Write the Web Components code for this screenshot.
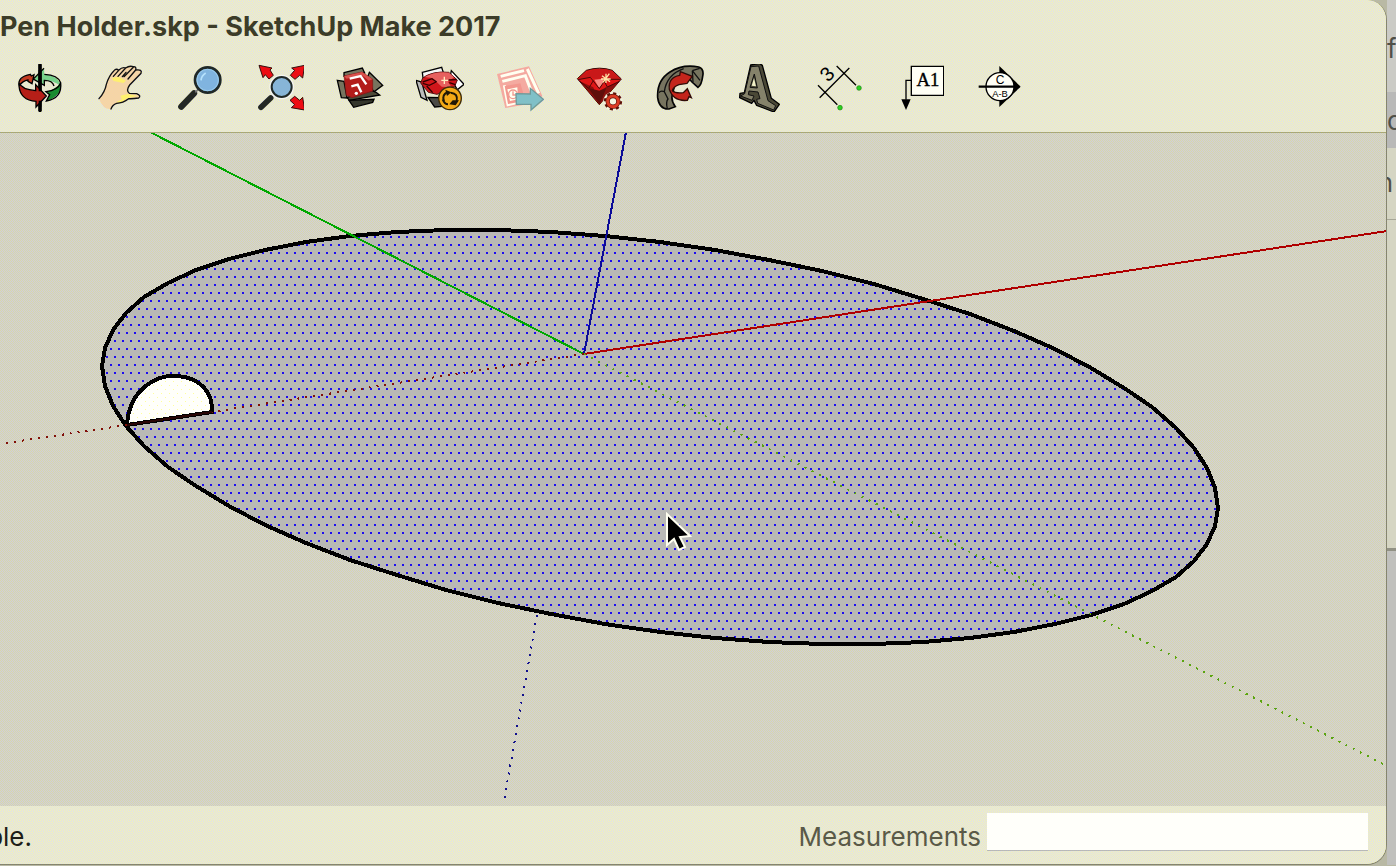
<!DOCTYPE html>
<html lang="en">
<head>
<meta charset="utf-8">
<title>Pen Holder.skp - SketchUp Make 2017</title>
<style>
    html, body {
        height: 100%;
        margin: 0;
    }

    body {
        overflow: hidden;
        font-family: Inter, "Liberation Sans", sans-serif;
        --chrome: repeating-conic-gradient(#dcdcf0 0 25%, #f6f6b0 0 50%) 0 0 / 2px 2px;
        --paper: repeating-conic-gradient(#d8d8a8 0 25%, #d0cedc 0 50%) 0 0 / 2px 2px;
    }
</style>
</head>
<body>
<sketch-desktop>
    <sketch-window>
        <window-title slot="header">Pen Holder.skp - SketchUp Make 2017</window-title>
        <tool-bar slot="header">
            <tool-button label="Orbit">
                <svg viewBox="48 42 144 144">
                    <path fill="#c33a20" d="M57 98Q64 78 91 73L94 78L102 74L96 101L84 94V90Q68 92 57 108Z"/>
                    <path fill="#78d28b" d="M132 55L100 87L133 106V91Q160 92 182 108Q179 80 133 73Z"/>
                    <path fill="#188c30" d="M182 99Q186 138 139 153L149 134L138 125Q164 120 182 99Z"/>
                    <path stroke="#000" stroke-width="11" stroke-linecap="round" d="M120 45V181"/>
                    <path fill="#b51f18" d="M57 98Q63 117 107 122V104L139 138L108 171V154Q54 148 57 98Z"/>
                    <path fill="none" stroke="#000" stroke-width="4" d="M57 108Q68 92 84 90V94L96 101L102 74L94 78L91 73Q52 80 57 108Q61 151 108 154V171L139 138L107 104V122Q65 118 57 98M132 55L100 87L133 106V91Q158 91 162 108M133 73Q174 75 182 98Q187 145 139 153L149 134L138 125Q174 121 182 98"/>
                    <path stroke="#000" stroke-width="8" d="M120 60V124M120 152V170"/>
                </svg>
            </tool-button>
            <tool-button label="Pan">
                <svg viewBox="288 42 144 144">
                    <path fill="#f5d5a7" d="M297 146Q315 126 319 103Q326 78 342 62Q349 54 356 61Q367 50 377 54Q388 46 400 50Q410 49 407 60Q428 57 423 70L389 105Q377 122 388 130L410 131Q425 137 416 144Q398 147 386 146Q369 159 350 160Q337 164 333 177Q310 180 297 146Z"/>
                    <path fill="#fff06e" d="M335 84L355 80L370 88L378 92L370 99L341 93ZM361 137L384 132L413 138L381 145L362 158L348 157L366 148Z"/>
                    <path fill="none" stroke="#111" stroke-width="4" stroke-linecap="round" d="M297 146Q315 126 319 103Q326 78 342 62Q349 54 356 61Q367 50 377 54Q388 46 400 50Q410 49 407 60Q428 57 423 70L389 105Q377 122 388 130L410 131Q425 137 416 144Q398 147 386 146Q369 159 350 160Q337 164 333 177M356 61L340 79M377 54L354 79M378 67L367 80M400 52L372 80M407 60L384 87"/>
                </svg>
            </tool-button>
            <tool-button label="Zoom">
                <svg viewBox="528 42 144 144">
                    <path stroke="#242824" stroke-width="19" stroke-linecap="round" d="M544 170L582 130"/>
                    <path stroke="#777" stroke-width="5" d="M586 127L600 112"/>
                    <circle cx="623" cy="90" r="38" fill="#80b4df" stroke="#202927" stroke-width="8"/>
                    <circle cx="623" cy="90" r="32" fill="none" stroke="#9bccec" stroke-width="3"/>
                    <path fill="none" stroke="#b5e1fb" stroke-width="5" d="M603 91Q604 78 617 69"/>
                </svg>
            </tool-button>
            <tool-button label="Zoom Extents">
                <svg viewBox="18 42 144 144">
                    <g fill="#ed0c13" stroke="#35100c" stroke-width="3">
                        <path d="M27 46L66 54L60 60L70 76L57 87L46 74L39 83Z"/>
                        <path d="M164 46L158 84L149 76L135 88L121 76L134 61L125 54Z"/>
                        <path d="M164 180L124 173L134 164L120 151L134 139L149 151L158 142Z"/>
                    </g>
                    <path stroke="#242824" stroke-width="17" stroke-linecap="round" d="M33 172L62 144"/>
                    <circle cx="95" cy="111" r="37" fill="#f6f6f0"/>
                    <circle cx="95" cy="111" r="30" fill="#87b5d7" stroke="#202927" stroke-width="6"/>
                </svg>
            </tool-button>
            <tool-button label="3D Warehouse">
                <svg viewBox="258 42 144 144">
                    <g stroke="#000" stroke-width="4" fill="#77745f">
                        <path d="M282 68L337 54L344 69L282 79Z"/>
                        <path d="M262 91L282 94L291 144L274 143Z"/>
                        <path d="M358 67L398 106L371 126L351 86Z"/>
                        <path fill="#4c4938" d="M291 142L298 151L389 135L378 127L365 121Z"/>
                        <path fill="#34362c" d="M297 151L311 172L368 157L372 148Z"/>
                    </g>
                    <path fill="#b31c1b" stroke="#7e1717" stroke-width="2" d="M282 78L336 66L368 88V123L306 143L289 136Z"/>
                    <path fill="#d9504c" d="M282 78L336 66L368 88L356 92L336 76L290 86Z"/>
                    <path fill="none" stroke="#fff" stroke-width="7" d="M299 86L332 78L349 103M304 109L323 104L334 127"/>
                    <circle cx="319" cy="130" r="5" fill="#fff"/>
                </svg>
            </tool-button>
            <tool-button label="Extension Warehouse">
                <svg viewBox="498 42 144 144">
                    <g stroke="#000" stroke-width="4">
                        <path fill="#f6f6f6" d="M517 67L575 52L582 74L519 84Z"/>
                        <path fill="#fff" d="M604 62L642 103L622 119L600 82Z"/>
                        <path fill="#bbb" d="M498 91L515 96L531 151L513 142Z"/>
                        <path fill="#4a4a46" d="M534 142L554 171L576 169V143Z"/>
                    </g>
                    <path fill="#d0161a" stroke="#511" stroke-width="3" d="M518 84Q548 62 596 67L622 90L614 109L561 133L535 127L512 99Z"/>
                    <path fill="#e7605f" d="M524 81Q555 63 597 68L612 82L594 96L605 112L575 110L558 94L546 84Z"/>
                    <path stroke="#300" stroke-width="4" fill="none" d="M518 96L546 86L560 96M518 100L538 106L558 96M530 108L548 128M596 90L620 89M598 98L616 104"/>
                    <path stroke="#ffedc0" stroke-width="4" d="M583 80V102M574 91H594"/>
                    <circle cx="600" cy="145" r="34" fill="#f4a916" stroke="#3d2b08" stroke-width="4"/>
                    <path fill="none" stroke="#211806" stroke-width="6" d="M582 154Q574 135 593 126M602 128Q625 130 620 153M594 163Q584 163 578 148"/>
                    <path fill="#211806" d="M586 119L604 127L591 138ZM608 151H627L617 166L598 163Z"/>
                </svg>
            </tool-button>
            <tool-button label="Send to LayOut">
                <svg viewBox="48 42 144 144">
                    <path fill="#f4aaa0" d="M51 72L147 49L187 138L165 159L76 174Z"/>
                    <path fill="none" stroke="#fffff0" stroke-width="9" d="M62 79L132 62M67 94L136 77L154 124M73 106L84 164L116 156M142 57L176 130"/>
                    <path fill="#f2988f" d="M74 108L121 100L129 127L112 157L84 162Z"/>
                    <path fill="#fffff0" d="M82 118L112 112L114 148L90 153Z"/>
                    <circle cx="99" cy="133" r="13" fill="none" stroke="#f2988f" stroke-width="4"/>
                    <path fill="none" stroke="#f2988f" stroke-width="4" d="M99 124V135H108"/>
                    <path fill="#80c0c7" stroke="#6f9a9a" stroke-width="4" d="M108 131L151 132V115L190 148L153 180V163H109Z"/>
                </svg>
            </tool-button>
            <tool-button label="Extension Manager">
                <svg viewBox="288 42 144 144">
                    <path fill="#df1616" stroke="#3c0804" stroke-width="3" d="M292 86L319 61Q359 48 397 61L424 87L358 164Z"/>
                    <path fill="#c91819" d="M312 72Q350 48 397 63L421 86L388 92L369 82L350 88L331 81L294 88Z"/>
                    <path fill="#8a100d" d="M299 94L340 112L358 162ZM420 92L375 113L359 162Z"/>
                    <path fill="#5f0e0b" d="M325 114L358 122L380 112L359 163Z"/>
                    <path fill="#f78c83" d="M343 89L369 86L371 98L357 114Z"/>
                    <path fill="none" stroke="#4c0806" stroke-width="3" d="M294 89L331 82L358 116L377 88L420 88M300 94L326 115L340 92M373 94L382 111L417 95"/>
                    <path stroke="#ffe6aa" stroke-width="4" d="M366 77L390 95M388 71L369 97M378 71V99M363 87H392"/>
                    <circle cx="399" cy="154" r="29" fill="#f4f4df"/>
                    <circle cx="399" cy="154" r="23" fill="none" stroke="#5e1208" stroke-width="9" stroke-dasharray="9 9"/>
                    <circle cx="399" cy="154" r="16" fill="none" stroke="#5e1208" stroke-width="13"/>
                    <circle cx="399" cy="154" r="16" fill="none" stroke="#dd3b24" stroke-width="9"/>
                </svg>
            </tool-button>
            <tool-button label="Follow Me">
                <svg viewBox="528 42 144 144">
                    <path fill="#77745f" stroke="#050505" stroke-width="5" d="M567 177Q538 179 533 143Q530 91 570 66Q607 42 656 51Q673 57 668 79Q665 104 654 112L636 96L624 82Q580 94 580 126Q569 146 586 170Z"/>
                    <path fill="none" stroke="#111" stroke-width="4" d="M537 128Q542 121 553 125L564 147Q557 156 562 176M553 125Q560 74 611 56M637 62L639 96M637 62L659 55M637 62L660 91"/>
                    <path fill="#c4251b" stroke="#310c08" stroke-width="4" d="M568 118Q564 82 599 76L601 65L637 79L621 100L597 104Q580 110 577 122Q586 131 610 128L622 116L634 143L627 140L622 151Q580 155 568 118Z"/>
                </svg>
            </tool-button>
            <tool-button label="3D Text">
                <svg viewBox="48 42 144 144">
                    <path fill="#4a4836" stroke="#000" stroke-width="4" stroke-linejoin="round" d="M92 45L118 40L127 46L154 145L178 163L162 186L110 166L102 151L95 160L59 143L60 130L73 128Z"/>
                    <path fill="#85826a" stroke="#111" stroke-width="3" fill-rule="evenodd" d="M93 50L116 48L144 152L167 167L161 180L113 160L110 148L120 146L114 126L87 123L85 134L102 138L96 151L62 138L74 131ZM103 72L90 112L112 114Z"/>
                    <path fill="#f0f0c8" d="M102 84L95 107L108 109Z"/>
                </svg>
            </tool-button>
            <tool-button label="Dimensions">
                <svg viewBox="288 42 144 144">
                    <path stroke="#000" stroke-width="4" d="M299 143L388 54M350 48L408 106M294 106L352 164"/>
                    <text transform="translate(324 98) rotate(-45)" font-size="60" font-family="Liberation Sans">3</text>
                    <g fill="#28d21f" stroke="#258015" stroke-width="2"><circle cx="417" cy="114" r="7"/><circle cx="360" cy="173" r="7"/></g>
                </svg>
            </tool-button>
            <tool-button label="Text">
                <svg viewBox="528 42 144 144">
                    <path fill="#fffff5" stroke="#000" stroke-width="4" d="M574 49H671V136H574Z"/>
                    <path fill="none" stroke="#000" stroke-width="4" d="M574 91H558V149"/>
                    <path d="M544 148H572L558 180Z"/>
                    <text x="624" y="108" text-anchor="middle" font-size="56" font-family="Liberation Serif" stroke="#000" stroke-width="1">A1</text>
                </svg>
            </tool-button>
            <tool-button label="Section Plane">
                <svg viewBox="768 42 144 144">
                    <path d="M838 48L902 110L838 171Z"/>
                    <circle cx="840" cy="110" r="42" fill="#fffff5" stroke="#000" stroke-width="4"/>
                    <path stroke="#000" stroke-width="7" d="M776 110H898"/>
                    <text x="840" y="102" text-anchor="middle" font-size="36" font-family="Liberation Sans">C</text>
                    <text x="840" y="140" text-anchor="middle" font-size="28" font-family="Liberation Sans">A-B</text>
                </svg>
            </tool-button>
        </tool-bar>
        <model-view></model-view>
        <status-bar slot="footer" label="Measurements">ble.</status-bar>
    </sketch-window>
</sketch-desktop>

<script>
function define (name, html, setup) {
    const template = document.createElement('template')
    template.innerHTML = html

    customElements.define(name, class extends HTMLElement {
        constructor () {
            super()
            this.attachShadow({ mode: 'open' })
            this.shadowRoot.appendChild(template.content.cloneNode(true))
        }

        connectedCallback () {
            if (setup) setup(this, this.shadowRoot)
        }
    })
}

// the window in front, and a sliver of the one behind it
define('sketch-desktop', `
    <style>
        :host {
            display: grid;
            grid-template-columns: minmax(0, 1fr) 9px;
            height: 100vh;
            box-sizing: border-box;
            padding-bottom: 1px;
            background: #b9b9a4;
        }

        .behind {
            display: flex;
            flex-direction: column;
            overflow: hidden;
            color: #505048;
            font-size: 26px;
            line-height: 30px;
            background: #d5d5c3;
        }

        .row {
            box-sizing: border-box;
            flex: none;
            height: 72px;
            padding-top: 20px;
        }

        .row.top {
            height: 92px;
            padding-top: 34px;
            background: #cbcbc6;
        }

        .row.active {
            height: 56px;
            padding-top: 14px;
            background: #b9b9b8;
        }

        .row.last {
            border-bottom: 1px solid #a7a798;
        }

        .fill {
            flex: none;
            height: 328px;
            border-bottom: 3px solid #919184;
        }

        .rest {
            flex: 1;
            background: #c0c0bd;
        }

        span {
            display: block;
        }

        .cut {
            direction: rtl;
            width: 6px;
        }
    </style>
    <slot></slot>
    <div class="behind">
        <div class="row top"><span>f</span></div>
        <div class="row active"><span>d</span></div>
        <div class="row last"><span class="cut">n</span></div>
        <div class="fill"></div>
        <div class="rest"></div>
    </div>
`)

define('sketch-window', `
    <style>
        :host {
            display: flex;
            flex-direction: column;
            min-width: 0;
            min-height: 0;
            overflow: hidden;
            border: solid #85856f;
            border-width: 0 1px 1px 0;
            border-radius: 0 20px 20px 0;
            background: #f0f0ac;
        }

        header {
            background: var(--chrome);
            border-bottom: 1px solid #a8a878;
        }

        main {
            flex: 1;
            min-height: 0;
        }
    </style>
    <header><slot name="header"></slot></header>
    <main><slot></slot></main>
    <slot name="footer"></slot>
`)

define('window-title', `
    <style>
        :host {
            display: block;
            color: #3c3c28;
            font-size: 27px;
            font-weight: 700;
            line-height: 54px;
            white-space: nowrap;
        }
    </style>
    <slot></slot>
`)

define('tool-bar', `
    <style>
        :host {
            display: flex;
            padding: 10px 0 20px;
        }
    </style>
    <slot></slot>
`)

define('tool-button', `
    <style>
        :host {
            display: block;
            flex: none;
            width: 80px;
        }

        button {
            display: block;
            width: 100%;
            height: 48px;
            padding: 0;
            border: 0;
            background: none;
        }

        ::slotted(svg) {
            display: block;
            width: 48px;
            height: 48px;
            margin: 0 auto;
        }
    </style>
    <button type="button"><slot></slot></button>
`, (host, root) => {
    root.querySelector('button').setAttribute('aria-label', host.getAttribute('label'))
})

define('model-view', `
    <style>
        :host {
            display: block;
            height: 100%;
            background: var(--paper);
        }

        svg {
            display: block;
            width: 100%;
            height: 100%;
        }

        .axis {
            fill: none;
            stroke-width: 2;
        }

        .behind {
            stroke-dasharray: 2 6;
        }
    </style>
    <svg viewBox="0 133 1386 673" preserveAspectRatio="xMidYMid slice" shape-rendering="crispEdges">
        <defs>
            <pattern id="selected" width="8" height="16" patternUnits="userSpaceOnUse">
                <rect width="8" height="16" fill="#b9b9b5"/>
                <path fill="#1c0cf0" d="M2 4h2v2h-2zM6 12h2v2h-2z"/>
            </pattern>
            <pattern id="light" width="8" height="8" patternUnits="userSpaceOnUse">
                <rect width="8" height="8" fill="#fffffa"/>
                <path fill="#ffff9c" d="M1 1h1v1h-1zM5 5h1v1h-1z"/>
            </pattern>
        </defs>
        <path id="disc" fill="url(#selected)" stroke="#000" stroke-width="4"/>
        <path fill="url(#light)" stroke="#000" stroke-width="4" d="M127 425C129 389 157 374 178 376C202 378 213 394 212 412Z"/>
        <path class="axis" stroke="#00a800" d="M150 132L584 354"/>
        <path class="axis" stroke="#0c0c98" d="M626 132L584 354"/>
        <path class="axis" stroke="#b00000" d="M584 354L1387 231"/>
        <path class="axis behind" stroke="#801008" d="M584 354L212 412M127 425L0 444"/>
        <path class="axis" stroke="#280404" d="M127 425L212 412"/>
        <path class="axis behind" stroke="#5aa410" d="M584 354L1387 766"/>
        <path class="axis behind" stroke="#10108c" d="M537 615L504 801"/>
        <path stroke="#fffff0" stroke-width="2" shape-rendering="auto" d="M667 514L690 536L680 537L685 547L679 550L674 539L667 545Z"/>
    </svg>
`, (host, root) => {
    // circle in perspective: both coordinates are cosines, the second one shifted
    const sides = 64
    const points = []
    for (let i = 0; i < sides; i++) {
        const a = i / sides * Math.PI * 2
        points.push(Math.round(660 + 558 * Math.cos(a)) + ' ' + Math.round(437 + 207 * Math.cos(a - 1.223)))
    }
    root.querySelector('#disc').setAttribute('d', 'M' + points.join('L') + 'Z')
})

define('status-bar', `
    <style>
        :host {
            display: flex;
            align-items: center;
            gap: 6px;
            height: 58px;
            box-sizing: border-box;
            padding: 0 18px 6px 0;
            background: var(--chrome);
            color: #1e1e18;
            font-size: 26px;
            line-height: 38px;
        }

        .message {
            display: flex;
            justify-content: flex-end;
            width: 32px;
            margin-right: auto;
            padding-top: 10px;
            overflow: hidden;
        }

        label {
            padding-top: 10px;
            color: #5a5a48;
        }

        input {
            box-sizing: border-box;
            width: 381px;
            height: 38px;
            padding: 0 8px;
            border: 0;
            border-bottom: 1px solid #b8b8b8;
            background: #fffffa;
            font: inherit;
        }
    </style>
    <div class="message"><slot></slot></div>
    <label for="value"></label>
    <input id="value" type="text">
`, (host, root) => {
    root.querySelector('label').textContent = host.getAttribute('label')
})
</script>
</body>
</html>
